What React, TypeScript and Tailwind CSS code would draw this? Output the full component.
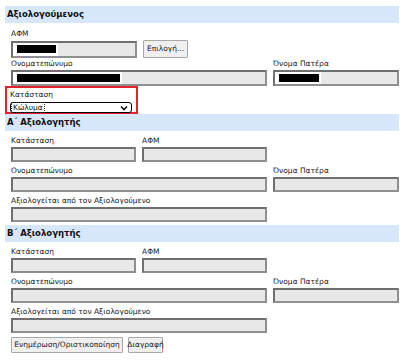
import React from "react";

const font = { fontFamily: '"DejaVu Sans", Verdana, sans-serif' };

function Header({ children }: { children: React.ReactNode }) {
  return (
    <div className="h-[17px] bg-[#d6e6fb] flex items-center pl-[2px] text-[8.5px] font-bold text-[#111]">
      {children}
    </div>
  );
}

function Label({ children }: { children: React.ReactNode }) {
  return <div className="h-[12px] leading-[12px] text-[7.5px] text-[#222] whitespace-nowrap">{children}</div>;
}

function Input({ className = "", children }: { className?: string; children?: React.ReactNode }) {
  return (
    <div
      className={
        "bg-[#e8e8e8] border-2 border-t-[#6f6f6f] border-l-[#6f6f6f] border-b-[#8f8f8f] border-r-[#8f8f8f] flex items-center " +
        className
      }
    >
      {children}
    </div>
  );
}

function Redact({ w }: { w: number }) {
  return (
    <div className="h-full flex items-center bg-white pl-[4px] pr-[2px]">
      <div className="h-[8px] bg-black" style={{ width: w }} />
    </div>
  );
}

function Btn({ children, className = "" }: { children: React.ReactNode; className?: string }) {
  return (
    <div
      className={
        "bg-[#efefef] border border-[#a8a8a8] rounded-[1px] flex items-center justify-center text-[7.5px] text-[#222] whitespace-nowrap " +
        className
      }
    >
      {children}
    </div>
  );
}

function Evaluator({ title }: { title: string }) {
  return (
    <>
      <Header>{title}</Header>
      <div className="pl-[6px] pt-[4px] flex flex-col gap-[3px]">
        <div className="grid grid-cols-[125px_125px_126px] gap-x-[6px]">
          <div>
            <Label>Κατάσταση</Label>
            <Input className="h-[15px]" />
          </div>
          <div>
            <Label>ΑΦΜ</Label>
            <Input className="h-[15px]" />
          </div>
        </div>
        <div className="grid grid-cols-[256px_126px] gap-x-[6px]">
          <div>
            <Label>Ονοματεπώνυμο</Label>
            <Input className="h-[15px]" />
          </div>
          <div>
            <Label>Όνομα Πατέρα</Label>
            <Input className="h-[15px]" />
          </div>
        </div>
        <div className="grid grid-cols-[256px]">
          <div>
            <Label>Αξιολογείται από τον Αξιολογούμενο</Label>
            <Input className="h-[15px]" />
          </div>
        </div>
      </div>
    </>
  );
}

export default function App() {
  return (
    <div className="w-[411px] h-[361px] bg-white overflow-hidden" style={font}>
      <div className="pl-[5px] pt-[6px] w-[399px]">
        <Header>Αξιολογούμενος</Header>
        <div className="pl-[6px] pt-[5px]">
          <Label>ΑΦΜ</Label>
          <div className="flex gap-[6px] items-center">
            <Input className="h-[17px] w-[126px]">
              <Redact w={39} />
            </Input>
            <Btn className="h-[18px] w-[45px]">Επιλογή...</Btn>
          </div>
          <div className="grid grid-cols-[256px_126px] gap-x-[6px]">
            <div>
              <Label>Ονοματεπώνυμο</Label>
              <Input className="h-[16px]">
                <Redact w={103} />
              </Input>
            </div>
            <div>
              <Label>Όνομα Πατέρα</Label>
              <Input className="h-[16px]">
                <Redact w={40} />
              </Input>
            </div>
          </div>
        </div>
        <div className="w-[133px] h-[28px] border-2 border-[#e0232e] pl-[3px] pt-[1px]">
          <Label>Κατάσταση</Label>
          <div className="mt-[1px] w-[122px] h-[11px] border border-black rounded-[3px] bg-white flex items-center justify-between pl-[1px] pr-[3px]">
            <span className="text-[7.5px] leading-[9px] text-[#111] outline outline-1 outline-dotted outline-[#333] px-[1px]">
              Κώλυμα
            </span>
            <svg width="8" height="6" viewBox="0 0 8 6">
              <path d="M1 1.5 L4 4.5 L7 1.5" stroke="#111" strokeWidth="1.6" fill="none" />
            </svg>
          </div>
        </div>
        <div>
          <Evaluator title="Α΄ Αξιολογητής" />
        </div>
        <div className="mt-[3px]">
          <Evaluator title="Β΄ Αξιολογητής" />
        </div>
        <div className="pl-[6px] mt-[4px] flex gap-[5px]">
          <Btn className="h-[16px] w-[112px]">Ενημέρωση/Οριστικοποίηση</Btn>
          <Btn className="h-[16px] w-[35px]">Διαγραφή</Btn>
        </div>
      </div>
    </div>
  );
}
